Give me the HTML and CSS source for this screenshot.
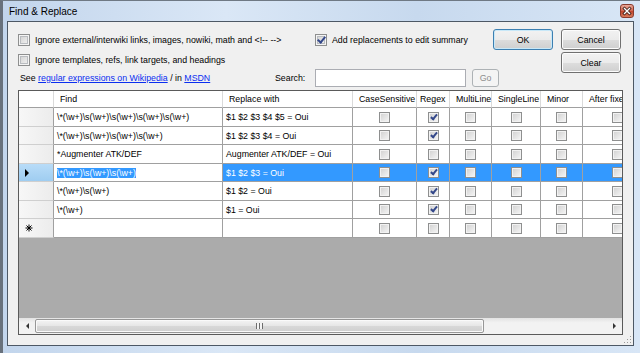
FILE: index.html
```html
<!DOCTYPE html>
<html lang="en">
<head>
    <meta charset="UTF-8">
    <meta name="viewport" content="width=device-width, initial-scale=1.0">
    <title>Find &amp; Replace</title>
    <link rel="stylesheet" href="styles.css">
</head>
<body>
<div class="window">
    <div class="titlebar">
        <span class="title">Find &amp; Replace</span>
        <span class="close-btn">
            <svg width="14" height="14" viewBox="0 0 14 14">
                <path d="M4.5 4.5l5 5M9.5 4.5l-5 5" stroke="#3a1a14" stroke-width="3" stroke-linecap="square"/>
                <path d="M4.5 4.5l5 5M9.5 4.5l-5 5" stroke="#fff" stroke-width="1.4" stroke-linecap="square"/>
            </svg>
        </span>
    </div>
    <div class="frame">
        <div class="client">
            <div class="top">
                <div class="options">
                    <div class="row row-a">
                        <label class="chk-label wide"><span class="chk"></span>Ignore external/interwiki links, images, nowiki, math and &lt;!-- --&gt;</label>
                        <label class="chk-label"><span class="chk on"></span>Add replacements to edit summary</label>
                    </div>
                    <div class="row row-b">
                        <label class="chk-label"><span class="chk"></span>Ignore templates, refs, link targets, and headings</label>
                    </div>
                    <div class="row row-c">
                        <span class="see">See <a href="#">regular expressions on Wikipedia</a> / in <a href="#">MSDN</a></span>
                        <span class="search-label">Search:</span>
                        <input class="search-box" type="text">
                        <button class="btn go" disabled>Go</button>
                    </div>
                </div>
                <div class="buttons">
                    <button class="btn default">OK</button>
                    <button class="btn">Cancel</button>
                    <button class="btn clear">Clear</button>
                </div>
            </div>

            <div class="grid">
                <div class="grid-body">
                    <table class="rules">
                        <colgroup>
                            <col class="c-head"><col class="c-find"><col class="c-repl"><col class="c-case"><col class="c-regex"><col class="c-multi"><col class="c-single"><col class="c-minor"><col class="c-after">
                        </colgroup>
                        <thead>
                            <tr>
                                <th class="corner"></th>
                                <th>Find</th>
                                <th>Replace with</th>
                                <th>CaseSensitive</th>
                                <th class="tight">Regex</th>
                                <th>MultiLine</th>
                                <th>SingleLine</th>
                                <th>Minor</th>
                                <th>After fixes</th>
                            </tr>
                        </thead>
                        <tbody>
                            <tr class="tall">
                                <th class="rh"></th>
                                <td>\*(\w+)\s(\w+)\s(\w+)\s(\w+)\s(\w+)</td>
                                <td>$1 $2 $3 $4 $5 = Oui</td>
                                <td class="c"><span class="box"></span></td>
                                <td class="c"><span class="box on"></span></td>
                                <td class="c"><span class="box"></span></td>
                                <td class="c"><span class="box"></span></td>
                                <td class="c"><span class="box"></span></td>
                                <td class="c"><span class="box"></span></td>
                            </tr>
                            <tr>
                                <th class="rh"></th>
                                <td>\*(\w+)\s(\w+)\s(\w+)\s(\w+)</td>
                                <td>$1 $2 $3 $4 = Oui</td>
                                <td class="c"><span class="box"></span></td>
                                <td class="c"><span class="box on"></span></td>
                                <td class="c"><span class="box"></span></td>
                                <td class="c"><span class="box"></span></td>
                                <td class="c"><span class="box"></span></td>
                                <td class="c"><span class="box"></span></td>
                            </tr>
                            <tr class="tall">
                                <th class="rh"></th>
                                <td>*Augmenter ATK/DEF</td>
                                <td>Augmenter ATK/DEF = Oui</td>
                                <td class="c"><span class="box"></span></td>
                                <td class="c"><span class="box"></span></td>
                                <td class="c"><span class="box"></span></td>
                                <td class="c"><span class="box"></span></td>
                                <td class="c"><span class="box"></span></td>
                                <td class="c"><span class="box"></span></td>
                            </tr>
                            <tr class="selected">
                                <th class="rh"><span class="current"></span></th>
                                <td class="editing"><span class="sel-text">\*(\w+)\s(\w+)\s(\w+)</span></td>
                                <td>$1 $2 $3 = Oui</td>
                                <td class="c"><span class="box"></span></td>
                                <td class="c"><span class="box on"></span></td>
                                <td class="c"><span class="box"></span></td>
                                <td class="c"><span class="box"></span></td>
                                <td class="c"><span class="box"></span></td>
                                <td class="c"><span class="box"></span></td>
                            </tr>
                            <tr class="tall">
                                <th class="rh"></th>
                                <td>\*(\w+)\s(\w+)</td>
                                <td>$1 $2 = Oui</td>
                                <td class="c"><span class="box"></span></td>
                                <td class="c"><span class="box on"></span></td>
                                <td class="c"><span class="box"></span></td>
                                <td class="c"><span class="box"></span></td>
                                <td class="c"><span class="box"></span></td>
                                <td class="c"><span class="box"></span></td>
                            </tr>
                            <tr>
                                <th class="rh"></th>
                                <td>\*(\w+)</td>
                                <td>$1 = Oui</td>
                                <td class="c"><span class="box"></span></td>
                                <td class="c"><span class="box on"></span></td>
                                <td class="c"><span class="box"></span></td>
                                <td class="c"><span class="box"></span></td>
                                <td class="c"><span class="box"></span></td>
                                <td class="c"><span class="box"></span></td>
                            </tr>
                            <tr class="tall">
                                <th class="rh">
                                    <svg class="new-row" width="8" height="8" viewBox="0 0 8 8">
                                        <path d="M4 0.5v7M0.5 4h7M1.5 1.5l5 5M6.5 1.5l-5 5" stroke="#000" stroke-width="1"/>
                                    </svg>
                                </th>
                                <td></td>
                                <td></td>
                                <td class="c"><span class="box"></span></td>
                                <td class="c"><span class="box"></span></td>
                                <td class="c"><span class="box"></span></td>
                                <td class="c"><span class="box"></span></td>
                                <td class="c"><span class="box"></span></td>
                                <td class="c"><span class="box"></span></td>
                            </tr>
                        </tbody>
                    </table>
                </div>
                <div class="hscroll">
                    <span class="arrow left"></span>
                    <span class="thumb"><span class="grip"></span></span>
                    <span class="track"></span>
                    <span class="arrow right"></span>
                </div>
            </div>

            <svg class="size-grip" width="8" height="8" viewBox="0 0 8 8">
                <rect x="6" y="0" width="1" height="1" fill="#9a9a9a"/>
                <rect x="3" y="3" width="1" height="1" fill="#9a9a9a"/>
                <rect x="6" y="3" width="1" height="1" fill="#9a9a9a"/>
                <rect x="0" y="6" width="1" height="1" fill="#9a9a9a"/>
                <rect x="3" y="6" width="1" height="1" fill="#9a9a9a"/>
                <rect x="6" y="6" width="1" height="1" fill="#9a9a9a"/>
            </svg>
        </div>
    </div>
</div>
</body>
</html>
```

FILE: styles.css
```css
* {
    box-sizing: border-box;
}
html, body {
    margin: 0;
    padding: 0;
}
body {
    width: 640px;
    height: 353px;
    overflow: hidden;
    font-family: "Liberation Sans", Arial, sans-serif;
    font-size: 8.8px;
    color: #000;
    background: #d3e2f3;
}
.window {
    width: 640px;
    height: 353px;
    display: flex;
    flex-direction: column;
    background: linear-gradient(to right, #c2d5ec 0%, #dae7f6 35%, #c7d9ee 65%, #d8e6f6 100%);
    border-top: 1px solid #6f7984;
    border-left: 3px solid #68717c;
}
.titlebar {
    height: 20px;
    flex: none;
    display: flex;
    align-items: center;
    padding: 0 6px;
}
.title {
    font-size: 10px;
    flex: 1;
}
.close-btn {
    width: 14px;
    height: 14px;
    border: 1px solid #8a3b2e;
    border-radius: 3px;
    background: linear-gradient(#e9a99a, #d0634e 50%, #c0432c 51%, #d77b5c);
    display: flex;
}
.close-btn svg {
    margin: -1px;
}
.frame {
    flex: 1;
    display: flex;
    min-height: 0;
    padding: 0 6px 7px 4px;
}
.client {
    flex: 1;
    min-width: 0;
    position: relative;
    display: flex;
    flex-direction: column;
    background: #f0f0f0;
    border: 1px solid #4d5865;
}

/* top options */
.top {
    height: 68px;
    flex: none;
    display: flex;
    padding: 7px 0 0 10px;
}
.options {
    width: 475px;
    flex: none;
}
.row {
    display: flex;
    align-items: center;
    height: 20px;
    white-space: nowrap;
}
.row > * {
    flex: none;
}
.row-a {
    margin-top: 1px;
}
.row-c {
    height: 18px;
    margin-top: -1px;
}
.chk-label {
    display: flex;
    align-items: center;
    gap: 5px;
}
.chk-label.wide {
    width: 297px;
}
.chk {
    width: 12px;
    height: 12px;
    position: relative;
    border: 1px solid #8e8f8f;
    background: linear-gradient(135deg, #cdcdcd, #f6f6f6);
    box-shadow: inset 0 0 0 1px #f4f4f4, inset 0 0 0 2px #b9bcc0;
}
.chk.on::after, .box.on::after {
    content: "";
    position: absolute;
    left: 3px;
    top: 0;
    width: 3px;
    height: 6px;
    border-right: 2px solid #34488a;
    border-bottom: 2px solid #34488a;
    transform: rotate(40deg);
}
.see {
    width: 257px;
    padding-left: 2px;
}
.see a {
    color: #0a2ef0;
}
.search-label {
    width: 40px;
}
.search-box {
    width: 151px;
    height: 18px;
    margin: 0;
    border: 1px solid #abadb3;
    background: #fff;
}
.btn {
    font-family: "Liberation Sans", Arial, sans-serif;
    font-size: 8.8px;
    color: #000;
    padding: 0;
    border: 1px solid #707070;
    border-radius: 3px;
    background: linear-gradient(#f2f2f2, #ebebeb 50%, #dddddd 51%, #cfcfcf);
    box-shadow: inset 0 0 0 1px #fcfcfc;
}
.btn.go {
    width: 27px;
    height: 18px;
    margin-left: 6px;
    color: #8d8d8d;
    border-color: #adb2b5;
    background: #f4f4f4;
    box-shadow: none;
}
.btn.default {
    border-color: #3c7fb1;
    box-shadow: inset 0 0 0 1px #c8e8f8;
}
.buttons {
    display: grid;
    grid-template-columns: 60px 60px;
    grid-auto-rows: 21px;
    column-gap: 8px;
    row-gap: 2px;
}
.buttons .clear {
    grid-column: 2;
}

/* rules grid */
.grid {
    flex: 1;
    min-height: 0;
    min-width: 0;
    margin: 0 10px 10px 10px;
    display: flex;
    flex-direction: column;
    border: 1px solid #5a5a5a;
    background: #ababab;
}
.grid-body {
    flex: 1;
    min-width: 0;
    overflow: hidden;
}
.rules {
    table-layout: fixed;
    border-collapse: separate;
    border-spacing: 0;
    width: 634px;
}
.c-head { width: 35px; }
.c-find { width: 169px; }
.c-repl { width: 130px; }
.c-case { width: 64px; }
.c-regex { width: 33px; }
.c-multi { width: 42px; }
.c-single { width: 49px; }
.c-minor { width: 42px; }
.c-after { width: 70px; }
.rules th, .rules td {
    height: 18px;
    padding: 0 3px;
    font-weight: normal;
    text-align: left;
    white-space: nowrap;
    overflow: hidden;
    border-right: 1px solid #a0a0a0;
    border-bottom: 1px solid #a0a0a0;
    background: #fff;
}
.rules tr.tall th, .rules tr.tall td {
    height: 19px;
}
.rules thead th {
    height: 17px;
    padding-left: 6px;
    border-right-color: #dadada;
}
.rules thead th.tight {
    padding-left: 3px;
}
.rules th.rh {
    padding: 0 0 0 5px;
    background: linear-gradient(to right, #f7f7f7, #ececec);
    border-bottom-color: #cfcfcf;
}
.rules td.c {
    padding: 0;
    text-align: center;
}
.rules tr.selected td {
    background: #3399ff;
    color: #fff;
}
.rules tr.selected td.editing {
    background: #fff;
}
.rules tr.selected th.rh {
    background: linear-gradient(#b8dcf8, #9fcdf1);
}
.sel-text {
    background: #3399ff;
    color: #fff;
}
.current {
    display: block;
    margin-left: 1px;
    width: 0;
    height: 0;
    border-left: 4px solid #000;
    border-top: 4px solid transparent;
    border-bottom: 4px solid transparent;
}
.new-row {
    display: block;
    margin-left: 1px;
}
.box {
    display: inline-block;
    position: relative;
    vertical-align: middle;
    width: 11px;
    height: 11px;
    border: 1px solid #8e8f8f;
    background: linear-gradient(135deg, #d0d0d0, #f6f6f6);
    box-shadow: inset 0 0 0 1px #f2f2f2;
}
.box.on::after {
    left: 3px;
    top: 0;
    width: 2px;
    height: 5px;
}

/* horizontal scrollbar */
.hscroll {
    height: 16px;
    flex: none;
    display: flex;
    background: linear-gradient(#e3e3e3, #f2f2f2 30%, #f2f2f2);
}
.arrow {
    width: 16px;
    flex: none;
    display: flex;
    align-items: center;
    justify-content: center;
}
.arrow::before {
    content: "";
    border-top: 3px solid transparent;
    border-bottom: 3px solid transparent;
}
.arrow.left::before {
    border-right: 3px solid #333;
}
.arrow.right::before {
    border-left: 3px solid #333;
}
.thumb {
    width: 449px;
    flex: none;
    margin: 1px 0;
    display: flex;
    align-items: center;
    justify-content: center;
    border: 1px solid #979797;
    border-radius: 2px;
    background: linear-gradient(#f4f4f4, #e6e6e6 50%, #d8d8d8 51%, #cfcfcf);
    box-shadow: inset 0 0 0 1px #fafafa;
}
.grip {
    width: 7px;
    height: 6px;
    background: repeating-linear-gradient(to right, #6d6d6d 0 1px, #f4f4f4 1px 3px);
}
.track {
    flex: 1;
}
.size-grip {
    position: absolute;
    right: 1px;
    bottom: 1px;
}
```
